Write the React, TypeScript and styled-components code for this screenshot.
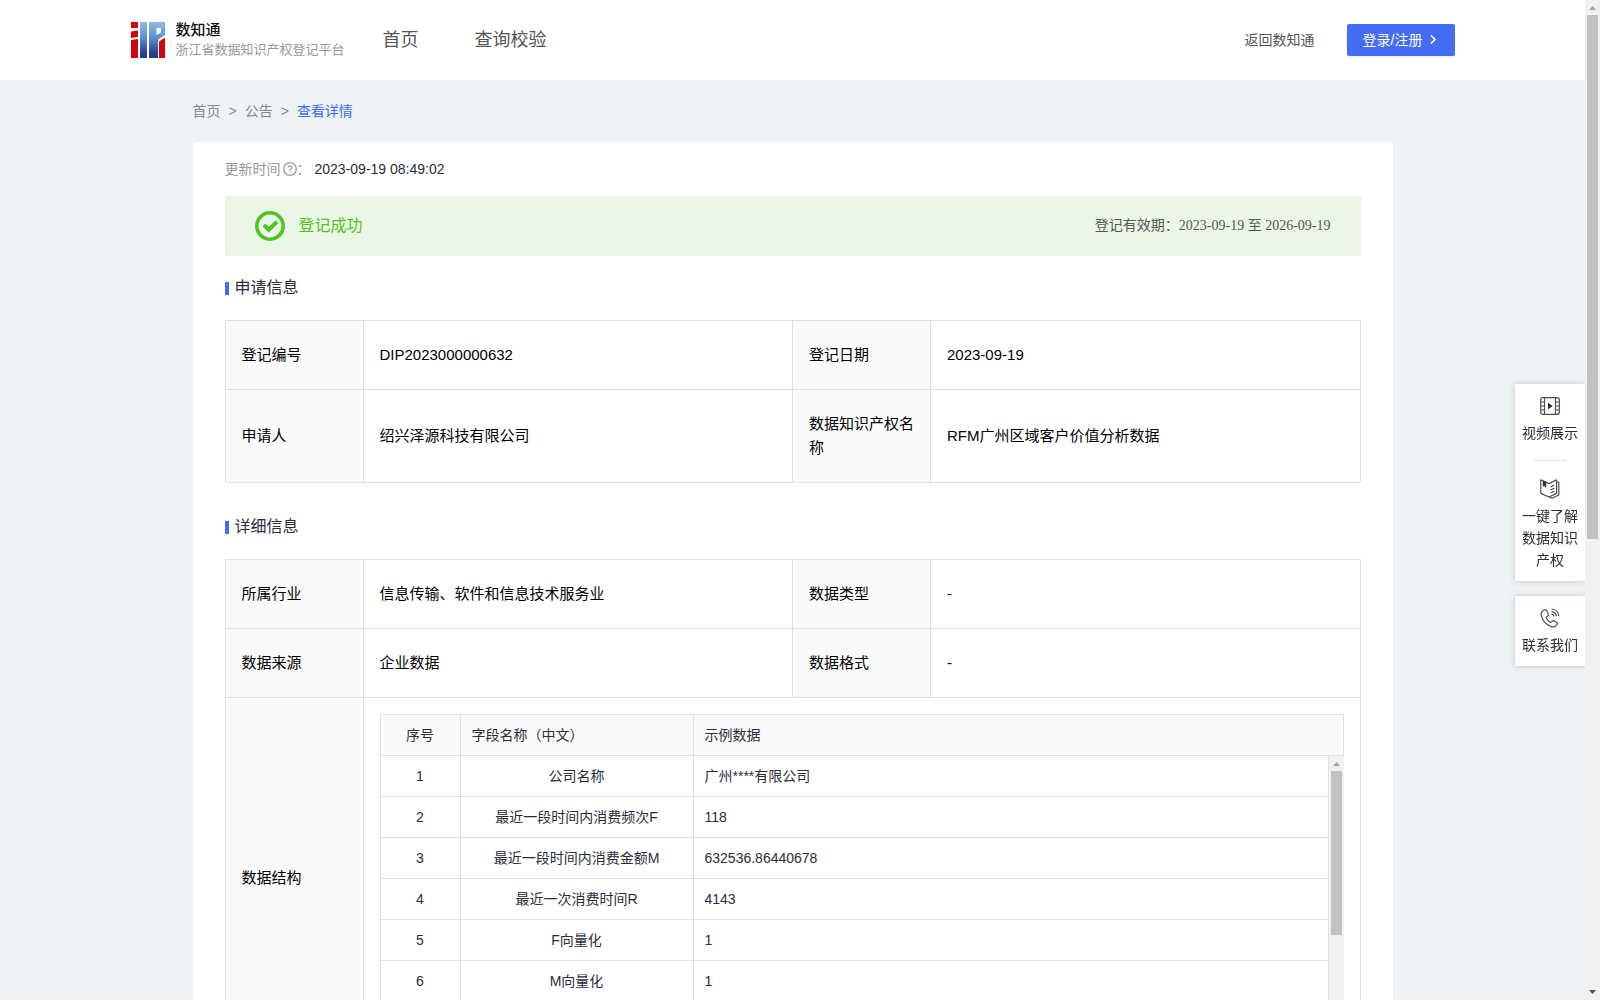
import React from 'react';
import styled, { createGlobalStyle, css } from 'styled-components';

const GlobalStyle = createGlobalStyle`
  *, *::before, *::after { box-sizing: border-box; }
  html, body { margin: 0; height: 100%; overflow: hidden; }
  body {
    font-family: "Liberation Sans", "Noto Sans CJK SC", sans-serif;
    font-size: 14px;
    line-height: 22px;
    color: #2a2d3b;
    background: #eef3f6;
  }
  a { color: inherit; text-decoration: none; }
`;

const Shell = styled.div`
  display: flex;
  height: 100vh;
`;

const scrollArea = css`
  flex: 1;
  min-width: 0;
  overflow-y: auto;
  scrollbar-width: none;
`;

const Page = styled.div`
  ${scrollArea}
`;

const BarTrack = styled.div`
  flex: none;
  display: flex;
  flex-direction: column;
  width: 15px;
  background: #f1f1f1;
`;

const BarSlot = styled.div`
  flex: 1;
  padding: 0 2px;
`;

const BarThumb = styled.div<{ $size: number }>`
  height: ${(p) => p.$size}%;
  background: #c1c1c1;
`;

const Scrollbar = ({ size }: { size: number }) => (
  <BarTrack aria-hidden="true">
    <svg width="15" height="15" viewBox="0 0 15 15">
      <path d="M4 10h7L7.500 6z" fill="#a3a3a3" />
    </svg>
    <BarSlot>
      <BarThumb $size={size} />
    </BarSlot>
    <svg width="15" height="15" viewBox="0 0 15 15">
      <path d="M4 5h7L7.500 9z" fill="#505050" />
    </svg>
  </BarTrack>
);

const Header = styled.header`
  background: #fff;
`;

const HeaderInner = styled.div`
  max-width: 1324px;
  height: 80px;
  margin: 0 auto;
  display: flex;
  align-items: center;
`;

const Brand = styled.a`
  display: flex;
  align-items: center;
  gap: 10px;
`;

const BrandText = styled.div`
  display: flex;
  flex-direction: column;
`;

const BrandName = styled.strong`
  font-size: 15px;
  line-height: 20px;
  font-weight: 500;
  color: #111;
`;

const BrandSub = styled.span`
  font-size: 13px;
  line-height: 20px;
  color: #999;
  white-space: nowrap;
`;

const Nav = styled.nav`
  display: flex;
  gap: 56px;
  margin-left: 38px;
  font-size: 18px;
  color: #555;
`;

const HeaderRight = styled.div`
  margin-left: auto;
  display: flex;
  align-items: center;
  gap: 32px;
  color: #555;
`;

const LoginButton = styled.button`
  display: flex;
  align-items: center;
  gap: 4px;
  height: 32px;
  padding: 0 16px;
  border: 0;
  border-radius: 2px;
  background: #446df6;
  color: #fff;
  font: inherit;
  box-shadow: 0 2px 0 rgba(0, 0, 0, 0.04);
`;

const Main = styled.main`
  max-width: 1200px;
  min-height: 1775px;
  margin: 0 auto;
`;

const Crumbs = styled.nav`
  display: flex;
  gap: 8px;
  padding: 20px 0;
  color: #888;
`;

const CurrentCrumb = styled.span`
  color: #3b6cf6;
`;

const Card = styled.section`
  padding: 16px 32px 40px;
  border-radius: 4px;
  background: #fff;
`;

const UpdateRow = styled.div`
  display: flex;
  align-items: center;
  margin-bottom: 16px;
`;

const UpdateLabel = styled.span`
  display: flex;
  align-items: center;
  margin-right: 4px;
  color: #999;

  svg { margin-left: 2px; }
`;

const Banner = styled.div`
  display: flex;
  align-items: center;
  gap: 14px;
  height: 60px;
  padding: 0 30px;
  background: #ebf7e6;
`;

const BannerStatus = styled.span`
  font-size: 16px;
  color: #52c41a;
`;

const BannerPeriod = styled.span`
  margin-left: auto;
  font-family: "Liberation Serif", "Noto Sans CJK SC", serif;
  color: #555;
`;

const SectionTitle = styled.h2`
  display: flex;
  align-items: center;
  gap: 6px;
  height: 64px;
  margin: 0;
  font-size: 16px;
  font-weight: 400;

  &::before {
    content: '';
    width: 4px;
    height: 13px;
    background: #446df6;
  }
`;

const InfoTable = styled.table`
  width: 100%;
  margin-bottom: 12px;
  table-layout: fixed;
  border-collapse: collapse;
  font-size: 15px;
  line-height: 24px;
  color: #000;
`;

const LabelCol = styled.col`
  width: 138px;
`;

const InfoLabel = styled.th`
  padding: 22px 16px;
  border: 1px solid #e1e1e1;
  background: #fafafa;
  font-weight: 400;
  text-align: left;
`;

const InfoValue = styled.td<{ $nested?: boolean }>`
  padding: ${(p) => (p.$nested ? '16px' : '22px 16px')};
  border: 1px solid #e1e1e1;
`;

const FieldBody = styled.div`
  display: flex;
  height: 286px;
`;

const FieldScroller = styled.div`
  ${scrollArea}
`;

const FieldTable = styled.table<{ $head?: boolean }>`
  width: 100%;
  table-layout: fixed;
  border-collapse: separate;
  border-spacing: 0;
  border-left: 1px solid #e1e1e1;
  border-top: ${(p) => (p.$head ? '1px solid #e1e1e1' : '0')};
  font-size: 14px;
  line-height: 22px;
  color: #2a2d3b;
`;

const FieldCol = styled.col<{ $width?: number }>`
  width: ${(p) => (p.$width ? `${p.$width}px` : 'auto')};
`;

const fieldCell = css`
  height: 41px;
  padding: 9px 11px;
  border-right: 1px solid #e1e1e1;
  border-bottom: 1px solid #e1e1e1;
`;

const FieldHead = styled.th<{ $center?: boolean }>`
  ${fieldCell}
  background: #fafafa;
  font-weight: 400;
  text-align: ${(p) => (p.$center ? 'center' : 'left')};
`;

const FieldCell = styled.td<{ $center?: boolean }>`
  ${fieldCell}
  text-align: ${(p) => (p.$center ? 'center' : 'left')};
`;

const Aside = styled.aside`
  position: fixed;
  top: 384px;
  right: 15px;
  width: 70px;
  display: flex;
  flex-direction: column;
  gap: 15px;
`;

const AsideGroup = styled.div`
  background: #fff;
  box-shadow: 0 0 6px rgba(0, 0, 0, 0.2);
  clip-path: inset(-10px 0 -10px -10px);
`;

const AsideButton = styled.button`
  display: flex;
  flex-direction: column;
  align-items: center;
  gap: 6px;
  width: 100%;
  padding: 12px 7px 10px;
  border: 0;
  background: none;
  font: inherit;
  color: #2a2d3b;
`;

const AsideDivider = styled.hr`
  width: 32px;
  margin: 6px auto;
  border: 0;
  border-top: 1px solid #e1e1e1;
`;

const Logo = () => (
  <svg width="35" height="36" viewBox="0 0 35 36" aria-hidden="true">
    <defs>
      <linearGradient id="logo-blue" gradientUnits="userSpaceOnUse" x1="0" y1="0" x2="0" y2="36">
        <stop offset="0" stopColor="#8cbbea" />
        <stop offset="0.4" stopColor="#6493d2" />
        <stop offset="0.85" stopColor="#2a4391" />
        <stop offset="1" stopColor="#253a86" />
      </linearGradient>
    </defs>
    <path fill="#d0060c" d="M0 0h7v6H0zM0 9.500l7-1V15l-7 1zM0 18l7-1v19H0zM28 19.500l6-4V36h-6z" />
    <path fill="url(#logo-blue)" d="M9 0h7v36H9zM18 0h16v13l-7 4.500V36h-9z" />
    <path fill="#fff" d="M25.500 6H30v4.500L25.500 13z" />
  </svg>
);

const QuestionIcon = () => (
  <svg width="14" height="14" viewBox="0 0 14 14" fill="none" stroke="#999" aria-hidden="true">
    <circle cx="7" cy="7" r="6.300" strokeWidth="1.300" />
    <path d="M5.200 5.600a1.800 1.800 0 1 1 2.600 1.600c-.6.3-.8.6-.8 1.200" strokeWidth="1.200" />
    <path d="M7 9.400v1.200" strokeWidth="1.200" />
  </svg>
);

const SuccessIcon = () => (
  <svg width="30" height="30" viewBox="0 0 30 30" fill="none" stroke="#4fc51f" aria-hidden="true">
    <circle cx="15" cy="15" r="13.200" strokeWidth="3.600" />
    <path d="M8.800 14l5 4.800 8.200-8" strokeWidth="4" />
  </svg>
);

const ChevronIcon = () => (
  <svg width="12" height="14" viewBox="0 0 12 14" fill="none" stroke="#fff" strokeWidth="1.600" aria-hidden="true">
    <path d="M4 2.500l4 4-4 4" />
  </svg>
);

const VideoIcon = () => (
  <svg width="20" height="20" viewBox="0 0 20 20" fill="none" stroke="#4a4d58" strokeWidth="1.200" aria-hidden="true">
    <rect x="0.7" y="1.700" width="18.600" height="16.600" rx="2" />
    <path d="M4.500 1.600v16.800M15.500 1.600v16.800M.6 6h4M.6 10h4M.6 14h4M15.500 6h4M15.500 10h4M15.500 14h4" />
    <path d="M8 6.800l4.800 3.200L8 13.200z" fill="#2a2d3b" stroke="none" />
  </svg>
);

const BookIcon = () => (
  <svg width="20" height="20" viewBox="0 0 20 20" fill="none" stroke="#4a4d58" strokeWidth="1.200" strokeLinejoin="round" aria-hidden="true">
    <path d="M.8.8L9 4.600 16.600.8v13.600L9 18 .8 14.400z" />
    <path d="M16.600 3h2.200v13L12 19.200 9 18" />
    <path d="M10.500 8l3.800-1.800M10.500 11l3.800-1.800M10.500 14l3.800-1.800" />
    <path d="M2.800 1.500l3.400 1.600v5.700L4.600 7.300l-1.800.3z" fill="#2a2d3b" stroke="none" />
  </svg>
);

const PhoneIcon = () => (
  <svg width="20" height="20" viewBox="0 0 20 20" fill="none" stroke="#4a4d58" strokeWidth="1.200" strokeLinejoin="round" aria-hidden="true">
    <path d="M3.600 2.200C1.400 3.600.6 6 1.600 8.800c1.600 4.600 4.600 7.800 9 9.600 2.900 1.100 5.200.2 6.500-1.900.5-.8.3-1.500-.4-2l-2.700-1.700c-.7-.4-1.300-.3-1.800.3l-.7.9c-.4.500-.9.600-1.500.3-1.700-1-2.900-2.400-3.700-4.200-.3-.6-.1-1.100.4-1.400l1-.6c.7-.4.9-1 .6-1.700L7 2.900c-.5-1.300-2-1.500-3.400-.7z" />
    <path d="M11.500 1c4 .2 7 3.200 7.400 7.200M11.500 3.600c2.700.2 4.500 2 4.900 4.600M11.500 6.200c1.300.2 2.100.9 2.400 2.100" />
  </svg>
);

type Pair = [string, string];

const applyRows: Pair[][] = [
  [['登记编号', 'DIP2023000000632'], ['登记日期', '2023-09-19']],
  [['申请人', '绍兴泽源科技有限公司'], ['数据知识产权名称', 'RFM广州区域客户价值分析数据']],
];

const detailRows: Pair[][] = [
  [['所属行业', '信息传输、软件和信息技术服务业'], ['数据类型', '-']],
  [['数据来源', '企业数据'], ['数据格式', '-']],
];

const fields: Pair[] = [
  ['公司名称', '广州****有限公司'],
  ['最近一段时间内消费频次F', '118'],
  ['最近一段时间内消费金额M', '632536.86440678'],
  ['最近一次消费时间R', '4143'],
  ['F向量化', '1'],
  ['M向量化', '1'],
];

const PairRows = ({ rows }: { rows: Pair[][] }) => (
  <>
    {rows.map((row) => (
      <tr key={row[0][0]}>
        {row.map(([label, value]) => (
          <React.Fragment key={label}>
            <InfoLabel scope="row">{label}</InfoLabel>
            <InfoValue>{value}</InfoValue>
          </React.Fragment>
        ))}
      </tr>
    ))}
  </>
);

const InfoCols = () => (
  <colgroup>
    <LabelCol />
    <col />
    <LabelCol />
    <col />
  </colgroup>
);

const FieldCols = () => (
  <colgroup>
    <FieldCol $width={80} />
    <FieldCol $width={233} />
    <FieldCol />
  </colgroup>
);

export default function App() {
  return (
    <>
      <GlobalStyle />
      <Shell>
        <Page>
          <Header>
            <HeaderInner>
              <Brand href="#">
                <Logo />
                <BrandText>
                  <BrandName>数知通</BrandName>
                  <BrandSub>浙江省数据知识产权登记平台</BrandSub>
                </BrandText>
              </Brand>
              <Nav>
                <a href="#home">首页</a>
                <a href="#check">查询校验</a>
              </Nav>
              <HeaderRight>
                <a href="#back">返回数知通</a>
                <LoginButton type="button">
                  登录/注册
                  <ChevronIcon />
                </LoginButton>
              </HeaderRight>
            </HeaderInner>
          </Header>

          <Main>
            <Crumbs>
              <a href="#home">首页</a>
              <span>&gt;</span>
              <a href="#notice">公告</a>
              <span>&gt;</span>
              <CurrentCrumb>查看详情</CurrentCrumb>
            </Crumbs>

            <Card>
              <UpdateRow>
                <UpdateLabel>
                  更新时间
                  <QuestionIcon />
                  ：
                </UpdateLabel>
                <span>2023-09-19 08:49:02</span>
              </UpdateRow>

              <Banner>
                <SuccessIcon />
                <BannerStatus>登记成功</BannerStatus>
                <BannerPeriod>登记有效期：2023-09-19 至 2026-09-19</BannerPeriod>
              </Banner>

              <SectionTitle>申请信息</SectionTitle>
              <InfoTable>
                <InfoCols />
                <tbody>
                  <PairRows rows={applyRows} />
                </tbody>
              </InfoTable>

              <SectionTitle>详细信息</SectionTitle>
              <InfoTable>
                <InfoCols />
                <tbody>
                  <PairRows rows={detailRows} />
                  <tr>
                    <InfoLabel scope="row">数据结构</InfoLabel>
                    <InfoValue colSpan={3} $nested>
                      <FieldTable $head>
                        <FieldCols />
                        <thead>
                          <tr>
                            <FieldHead $center>序号</FieldHead>
                            <FieldHead>字段名称（中文）</FieldHead>
                            <FieldHead>示例数据</FieldHead>
                          </tr>
                        </thead>
                      </FieldTable>
                      <FieldBody>
                        <FieldScroller>
                          <FieldTable>
                            <FieldCols />
                            <tbody>
                              {fields.map(([name, sample], i) => (
                                <tr key={name}>
                                  <FieldCell $center>{i + 1}</FieldCell>
                                  <FieldCell $center>{name}</FieldCell>
                                  <FieldCell>{sample}</FieldCell>
                                </tr>
                              ))}
                            </tbody>
                          </FieldTable>
                        </FieldScroller>
                        <Scrollbar size={64} />
                      </FieldBody>
                    </InfoValue>
                  </tr>
                </tbody>
              </InfoTable>
            </Card>
          </Main>
        </Page>
        <Scrollbar size={54} />
      </Shell>

      <Aside>
        <AsideGroup>
          <AsideButton type="button">
            <VideoIcon />
            视频展示
          </AsideButton>
          <AsideDivider />
          <AsideButton type="button">
            <BookIcon />
            一键了解数据知识产权
          </AsideButton>
        </AsideGroup>
        <AsideGroup>
          <AsideButton type="button">
            <PhoneIcon />
            联系我们
          </AsideButton>
        </AsideGroup>
      </Aside>
    </>
  );
}
